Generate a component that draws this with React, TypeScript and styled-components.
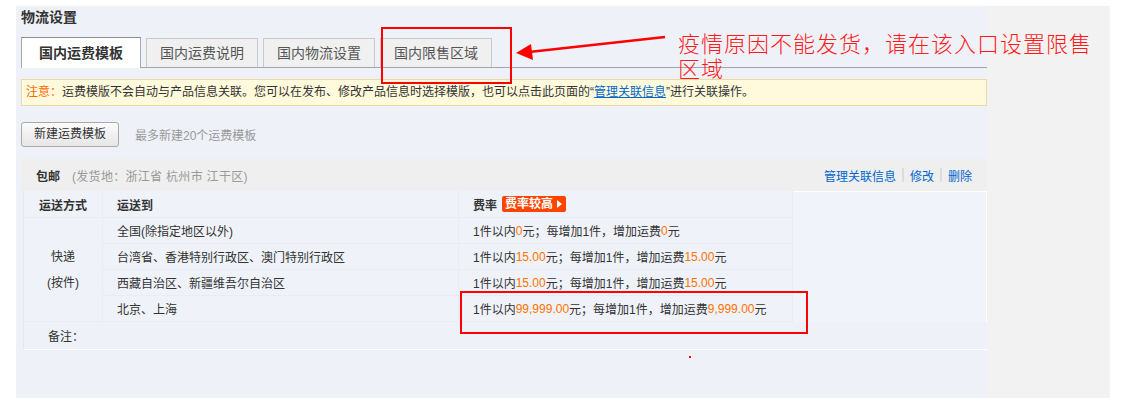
import React from 'react';
import styled, { createGlobalStyle } from 'styled-components';

const GlobalStyle = createGlobalStyle`
  html, body {
    margin: 0;
    padding: 0;
    background: #fff;
  }
  body {
    font-family: "Liberation Sans", "Noto Sans CJK SC", sans-serif;
    font-size: 12px;
    color: #333;
  }
`;

const tabs = ['国内运费模板', '国内运费说明', '国内物流设置', '国内限售区域'];

const rates = [
  { dest: '全国(除指定地区以外)', first: '0', extra: '0' },
  { dest: '台湾省、香港特别行政区、澳门特别行政区', first: '15.00', extra: '15.00' },
  { dest: '西藏自治区、新疆维吾尔自治区', first: '15.00', extra: '15.00' },
  { dest: '北京、上海', first: '99,999.00', extra: '9,999.00' },
];

const App: React.FC = () => {
  return (
    <Page>
      <GlobalStyle />
      <Main>
        <PageTitle>物流设置</PageTitle>
        <TabBar>
          {tabs.map((t, i) => (
            <Tab key={t} $active={i === 0}>{t}</Tab>
          ))}
        </TabBar>
        <Notice>
          <NoticeLabel>注意：</NoticeLabel>
          运费模版不会自动与产品信息关联。您可以在发布、修改产品信息时选择模版，也可以点击此页面的“<Link $underline>管理关联信息</Link>”进行关联操作。
        </Notice>
        <Toolbar>
          <Button>新建运费模板</Button>
          <Hint>最多新建20个运费模板</Hint>
        </Toolbar>
        <TemplateBox>
          <TemplateHeader>
            <Name>包邮</Name>
            <Origin>(发货地：浙江省 杭州市 江干区)</Origin>
            <Actions>
              <Link>管理关联信息</Link>
              <Sep />
              <Link>修改</Link>
              <Sep />
              <Link>删除</Link>
            </Actions>
          </TemplateHeader>
          <RateTable>
            <HeadCell $center>运送方式</HeadCell>
            <HeadCell>运送到</HeadCell>
            <HeadCell>
              费率
              <Badge>费率较高</Badge>
            </HeadCell>
            <EmptyCell />
            <MethodCell>
              <span>快递</span>
              <span>(按件)</span>
            </MethodCell>
            {rates.map((r) => (
              <React.Fragment key={r.dest}>
                <DestCell>{r.dest}</DestCell>
                <RateCell>
                  1件以内<Amount>{r.first}</Amount>元；每增加1件，增加运费<Amount>{r.extra}</Amount>元
                </RateCell>
              </React.Fragment>
            ))}
            <RemarkRow>备注：</RemarkRow>
          </RateTable>
        </TemplateBox>
      </Main>
      <Side />

      <Callout style={{ left: 381, top: 27, width: 131, height: 57 }} />
      <Callout style={{ left: 460, top: 291, width: 348, height: 43 }} />
      <Arrow width="160" height="40" viewBox="0 0 160 40">
        <line x1="150" y1="8" x2="14" y2="23" stroke="#ff0000" strokeWidth="2.5" />
        <polygon points="1,24 16,15 18,31" fill="#ff0000" />
      </Arrow>
      <CalloutText>疫情原因不能发货，请在该入口设置限售区域</CalloutText>
      <Dot />
    </Page>
  );
};

const Page = styled.div`
  position: relative;
  width: 1124px;
  height: 405px;
  box-sizing: border-box;
  padding: 6px 0 0 16px;
  display: flex;
  align-items: flex-start;
`;

const Main = styled.div`
  width: 971px;
  height: 392px;
  box-sizing: border-box;
  padding-left: 5px;
  background: #eef1f8;
  display: flex;
  flex-direction: column;
`;

const Side = styled.div`
  width: 123px;
  height: 392px;
  background: #f2f2f2;
`;

const PageTitle = styled.div`
  font-size: 14px;
  font-weight: bold;
  line-height: 23px;
  color: #333;
`;

const TabBar = styled.div`
  display: flex;
  align-items: flex-end;
  gap: 5px;
  margin-top: 8px;
  height: 30px;
  border-bottom: 1px solid #a3a5ab;
`;

const Tab = styled.div<{ $active?: boolean }>`
  box-sizing: border-box;
  height: ${(p) => (p.$active ? '31px' : '29px')};
  margin-bottom: ${(p) => (p.$active ? '-1px' : '0')};
  padding: ${(p) => (p.$active ? '0 17px' : '0 13px')};
  border: 1px solid ${(p) => (p.$active ? '#a8a8a8' : '#c9c9c9')};
  border-top-color: ${(p) => (p.$active ? '#8c8c8c' : '#c9c9c9')};
  border-bottom: none;
  background: ${(p) => (p.$active ? '#fff' : '#f0f0f0')};
  font-size: 14px;
  font-weight: ${(p) => (p.$active ? 'bold' : 'normal')};
  color: ${(p) => (p.$active ? '#333' : '#555')};
  line-height: ${(p) => (p.$active ? '30px' : '28px')};
  white-space: nowrap;
`;

const Notice = styled.div`
  margin-top: 11px;
  height: 27px;
  box-sizing: border-box;
  border: 1px solid #ecd9a6;
  background: #fffadb;
  padding-left: 4px;
  line-height: 25px;
  color: #333;
  white-space: nowrap;
`;

const NoticeLabel = styled.span`
  color: #ff6600;
`;

const Link = styled.span<{ $underline?: boolean }>`
  color: #0066cc;
  text-decoration: ${(p) => (p.$underline ? 'underline' : 'none')};
  cursor: pointer;
`;

const Toolbar = styled.div`
  display: flex;
  align-items: center;
  margin-top: 16px;
`;

const Button = styled.button`
  height: 25px;
  padding: 0 12px;
  border: 1px solid #aaa;
  border-radius: 3px;
  background: linear-gradient(#fbfbfb, #e6e6e6);
  font-family: inherit;
  font-size: 12px;
  color: #333;
  line-height: 23px;
`;

const Hint = styled.span`
  margin-left: 16px;
  color: #999;
`;

const TemplateBox = styled.div`
  margin-top: 12px;
`;

const TemplateHeader = styled.div`
  height: 32px;
  display: flex;
  align-items: center;
  padding: 0 15px;
  background: #efefef;
`;

const Name = styled.span`
  font-weight: bold;
  color: #333;
`;

const Origin = styled.span`
  margin-left: 12px;
  color: #999;
  letter-spacing: 0.3px;
`;

const Actions = styled.div`
  margin-left: auto;
  display: flex;
  align-items: center;
`;

const Sep = styled.span`
  width: 2px;
  height: 14px;
  margin: 0 6px;
  background: #dcdcdc;
`;

const RateTable = styled.div`
  display: grid;
  grid-template-columns: 79px 356px 334px 1fr;
  grid-template-rows: 27px repeat(4, 26px) 27px;
  margin-left: 2px;
  border-left: 1px solid #e4e7ef;
  border-bottom: 1px solid #fff;
  background: #eef1f8;
`;

const Cell = styled.div`
  display: flex;
  align-items: center;
  padding-left: 14px;
  border-bottom: 1px solid #e9ecf3;
  border-right: 1px solid #e9ecf3;
  background: #eff2f9;
  white-space: nowrap;
`;

const HeadCell = styled(Cell)<{ $center?: boolean }>`
  font-weight: bold;
  color: #333;
  justify-content: ${(p) => (p.$center ? 'center' : 'flex-start')};
  padding-left: ${(p) => (p.$center ? '0' : '14px')};
`;

const Badge = styled.span`
  display: inline-flex;
  align-items: center;
  height: 16px;
  margin-left: 5px;
  padding: 0 4px 0 3px;
  border-radius: 2px;
  background: #ff4400;
  color: #fff;
  font-weight: bold;
  line-height: 16px;

  &::after {
    content: '';
    margin-left: 4px;
    border-left: 5px solid #fff;
    border-top: 4px solid transparent;
    border-bottom: 4px solid transparent;
  }
`;

const EmptyCell = styled.div`
  grid-column: 4;
  grid-row: 1 / span 5;
  border-top: 1px solid #fff;
  border-right: 1px solid #fff;
  background: #f0f3fa;
`;

const MethodCell = styled(Cell)`
  grid-column: 1;
  grid-row: 2 / span 4;
  flex-direction: column;
  justify-content: center;
  padding-left: 0;
  line-height: 26px;
`;

const DestCell = styled(Cell)`
  grid-column: 2;
`;

const RateCell = styled(Cell)`
  grid-column: 3;
`;

const Amount = styled.span`
  color: #ff7300;
`;

const RemarkRow = styled.div`
  grid-column: 1 / -1;
  display: flex;
  align-items: center;
  padding-left: 24px;
  background: #eef1f8;
`;

const Callout = styled.div`
  position: absolute;
  box-sizing: border-box;
  border: 2px solid #ff0000;
`;

const Arrow = styled.svg`
  position: absolute;
  left: 515px;
  top: 29px;
`;

const CalloutText = styled.div`
  position: absolute;
  left: 678px;
  top: 30px;
  width: 418px;
  font-family: "Noto Sans CJK SC", sans-serif;
  font-size: 22px;
  font-weight: 300;
  letter-spacing: 1px;
  line-height: 25px;
  color: #ff1a1a;
`;

const Dot = styled.div`
  position: absolute;
  left: 689px;
  top: 356px;
  width: 2px;
  height: 2px;
  background: #ff0000;
`;

export default App;
